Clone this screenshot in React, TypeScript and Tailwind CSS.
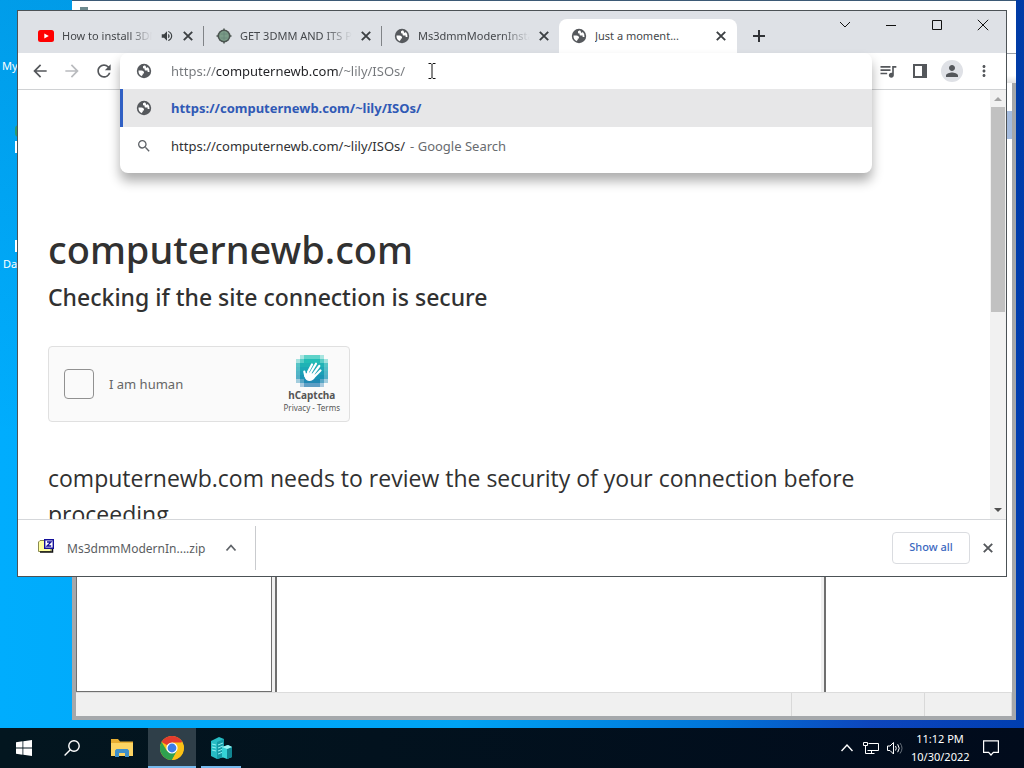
import type { ReactNode } from "react";
import clsx from "clsx";
import {
  MdArrowBack,
  MdArrowForward,
  MdMoreVert,
  MdPerson,
  MdQueueMusic,
  MdRefresh,
  MdSearch,
  MdVolumeUp,
} from "react-icons/md";

const URL_TEXT = "https://computernewb.com/~lily/ISOs/";

function GlobeIcon({ className }: { className?: string }) {
  return (
    <svg viewBox="0 0 16 16" className={clsx("shrink-0", className)} aria-hidden="true">
      <circle cx="8" cy="8" r="7.2" fill="#56595d" />
      <path
        d="M8.4 2.400 7 3.200v1.200c0 .7.5 1.100 1.100 1.100h.5v1.100c0 .6.5 1 1.100 1h1.900v1.300h1.900A5.500 5.500 0 0 0 11.800 4C11.200 5.200 9.900 4.900 9.900 3.900c0-.8-.5-1.500-1.500-1.500Z"
        fill="#fff"
      />
      <path
        d="M2.500 7.600h3c1.600 0 2.500 1 2.500 2.200v.6H6.800v1.200c0 .5-.4.9-.9.900v.700A5.600 5.600 0 0 1 2.500 7.600Z"
        fill="#fff"
      />
    </svg>
  );
}

function CloseIcon() {
  return (
    <svg viewBox="0 0 10 10" className="size-2.5" stroke="currentColor" strokeWidth="1.900" aria-hidden="true">
      <path d="m.8.8 8.400 8.400M9.200.8.8 9.200" />
    </svg>
  );
}

function YoutubeIcon() {
  return (
    <svg viewBox="0 0 16 12" className="h-3 w-4 shrink-0" aria-hidden="true">
      <rect width="16" height="12" rx="2.500" fill="#f00" />
      <path d="M6.300 3.400v5.200L10.800 6z" fill="#fff" />
    </svg>
  );
}

function GearGlobeIcon() {
  return (
    <svg viewBox="0 0 16 16" className="size-4 shrink-0" aria-hidden="true">
      <path d="M8 .5v15M.5 8h15" stroke="#4b5450" strokeWidth="1.500" />
      <circle cx="8" cy="8" r="6.500" fill="#4b5450" />
      <circle cx="8" cy="8" r="4.900" fill="#7b9c88" />
      <path d="M4.500 6h7M4.500 10h7M8 3.500v9" stroke="#67877a" strokeWidth=".8" />
    </svg>
  );
}

interface TabProps {
  title: string;
  icon: ReactNode;
  active?: boolean;
  audio?: boolean;
  divider?: boolean;
}

function Tab({ title, icon, active, audio, divider }: TabProps) {
  return (
    <div
      role="tab"
      aria-selected={!!active}
      className={clsx(
        "relative flex h-full w-[178px] items-center pl-3 pr-1.5",
        active && "-ml-px rounded-t-lg bg-white",
      )}
    >
      {icon}
      <span
        className={clsx(
          "ml-2 flex-1 overflow-hidden whitespace-nowrap text-[11px]",
          active ? "text-[#45474a]" : "text-[#45484c] [mask-image:linear-gradient(to_right,black_75%,transparent)]",
        )}
      >
        {title}
      </span>
      {audio && <MdVolumeUp className="ml-2 size-3.5 shrink-0 text-[#3c4043]" />}
      <button aria-label={`Close ${title}`} className="ml-1 flex size-5 shrink-0 items-center justify-center text-[#3c4043]">
        <CloseIcon />
      </button>
      {divider && <span className="absolute right-0 h-5 w-px bg-[#808387]" />}
    </div>
  );
}

function CaptionButton({ label, children }: { label: string; children: ReactNode }) {
  return (
    <button aria-label={label} className="flex h-7 w-[46px] items-center justify-center">
      <svg viewBox="0 0 12 12" className="size-3" fill="none" stroke="#111" aria-hidden="true">
        {children}
      </svg>
    </button>
  );
}

function TabStrip() {
  return (
    <div className="flex h-[42px] shrink-0 justify-between bg-[#dee1e6]">
      <div role="tablist" className="flex items-center pl-2 pt-2">
        <Tab title="How to install 3DMM" icon={<YoutubeIcon />} audio divider />
        <Tab title="GET 3DMM AND ITS PARTS" icon={<GearGlobeIcon />} divider />
        <Tab title="Ms3dmmModernInstaller" icon={<GlobeIcon className="size-4" />} />
        <Tab title="Just a moment..." icon={<GlobeIcon className="size-4" />} active />
        <button aria-label="New tab" className="ml-2 flex size-7 items-center justify-center">
          <svg viewBox="0 0 12 12" className="size-3" stroke="#303236" strokeWidth="2" aria-hidden="true">
            <path d="M6 0v12M0 6h12" />
          </svg>
        </button>
      </div>
      <div className="flex">
        <CaptionButton label="Search tabs">
          <path d="m1 3 5 5 5-5" />
        </CaptionButton>
        <CaptionButton label="Minimize">
          <path d="M1 6.500h10" />
        </CaptionButton>
        <CaptionButton label="Maximize">
          <path d="M1.500 1.500h9v9h-9z" />
        </CaptionButton>
        <CaptionButton label="Close">
          <path d="m.8.8 10.400 10.400M11.200.8.8 11.200" />
        </CaptionButton>
      </div>
    </div>
  );
}

function ToolButton({ label, children }: { label: string; children: ReactNode }) {
  return (
    <button aria-label={label} className="flex size-8 shrink-0 items-center justify-center text-[#54575b]">
      {children}
    </button>
  );
}

function Omnibox() {
  return (
    <div className="relative z-10 flex-1">
      <div className="absolute inset-x-0 top-0 overflow-hidden rounded-lg bg-white text-[13px] shadow-[0_8px_12px_rgba(0,0,0,0.32)]">
        <div className="flex h-9 items-center pl-4">
          <GlobeIcon className="size-4" />
          <input
            aria-label="Address and search bar"
            defaultValue={URL_TEXT}
            className="ml-[19px] w-[252px] bg-[linear-gradient(to_right,#74777b_45px,#202124_45px,#202124_168px,#74777b_168px)] bg-clip-text pt-0.5 text-transparent outline-none"
          />
          <svg viewBox="0 0 8 16" className="ml-[5px] h-4 w-2" fill="none" stroke="#111" aria-hidden="true">
            <path d="M.5.5h2.500l1 1 1-1h2.500M4 1.500v13M.5 15.500h2.500l1-1 1 1h2.500" />
          </svg>
        </div>
        <a href="#result" className="flex h-[38px] items-center border-l-3 border-[#3060c4] bg-[#e7e7e8] pl-[13px] font-bold text-[#3059b5]">
          <GlobeIcon className="size-4" />
          <span className="ml-[19px] pt-0.5">{URL_TEXT}</span>
        </a>
        <a href="#search" className="mb-2 flex h-[38px] items-center pl-4 text-[#303134]">
          <MdSearch className="size-4 text-[#5f6368]" />
          <span className="ml-[19px] pt-0.5">{URL_TEXT}</span>
          <span className="ml-[5px] pt-0.5 text-[#686b6f]">- Google Search</span>
        </a>
      </div>
    </div>
  );
}

function Toolbar() {
  return (
    <div className="flex h-[37px] shrink-0 items-start border-b border-[#d0d2d4] bg-white px-1.5">
      <div className="flex h-9 items-center">
        <ToolButton label="Back">
          <MdArrowBack className="size-5" />
        </ToolButton>
        <ToolButton label="Forward">
          <MdArrowForward className="size-5 text-[#b9bbbe]" />
        </ToolButton>
        <ToolButton label="Reload">
          <MdRefresh className="size-5" />
        </ToolButton>
      </div>
      <Omnibox />
      <div className="flex h-9 items-center">
        <ToolButton label="Media controls">
          <MdQueueMusic className="size-5" />
        </ToolButton>
        <ToolButton label="Side panel">
          <svg viewBox="0 0 14 14" className="size-3.5" aria-hidden="true">
            <path d="M1 1h12v12H1z" fill="none" stroke="#54575b" strokeWidth="2" />
            <path d="M9 1h4v12H9z" fill="#54575b" />
          </svg>
        </ToolButton>
        <ToolButton label="Profile">
          <span className="flex size-[22px] items-center justify-center rounded-full bg-[#dfe1e6]">
            <MdPerson className="size-[18px]" />
          </span>
        </ToolButton>
        <ToolButton label="Menu">
          <MdMoreVert className="size-[18px]" />
        </ToolButton>
      </div>
    </div>
  );
}

// Outer squares fade out so the badge reads as a pixelated disc.
const LOGO_ROWS = [" .oooo. ", ".oxxxxo.", "oxxxxxxo", "oxxxxxxo", "oxxxxxxo", "oxxxxxxo", ".oxxxxo.", " .oooo. "];
const LOGO_COLORS = ["#2cc5b8", "#22bdb6", "#1fb2b5", "#1ca8b6", "#1a9fb6", "#1b95b5", "#2089b3", "#2a7fb3"];
const LOGO_OPACITY: Record<string, number> = { ".": 0.4, o: 0.75, x: 1 };

function CaptchaLogo() {
  return (
    <svg viewBox="0 0 32 32" className="size-8" aria-hidden="true">
      <g shapeRendering="crispEdges">
        {LOGO_ROWS.map((row, y) =>
          row.split("").map((cell, x) =>
            cell === " " ? null : (
              <rect
                key={`${x}-${y}`}
                x={x * 4}
                y={y * 4}
                width="4"
                height="4"
                fill={LOGO_COLORS[y]}
                opacity={LOGO_OPACITY[cell]}
              />
            ),
          ),
        )}
      </g>
      <g stroke="#fff" strokeWidth="2.200" strokeLinecap="round">
        <path d="m12 17 4-7.500M14.500 18l5.500-9.300M17 19.500l6.300-8.500M18.500 21.500l6-6" />
        <path d="m9.300 21-1-4.500" />
      </g>
      <path d="M8.300 17.500c.7 1.500 2.500 1.200 3.300-.8l8.400 3.300-1 2.500c-1.500 3.200-5.700 4.500-8.500 2.500-1.800-1.200-2.500-4-2.200-7.500Z" fill="#fff" />
    </svg>
  );
}

function ChallengePage() {
  return (
    <main className="min-w-0 flex-1 overflow-hidden px-[30px] pt-[131px] text-[#313131]">
      <h1 className="text-[38px] leading-[56px] font-medium">computernewb.com</h1>
      <h2 className="pt-0.5 text-[23px] leading-9 font-medium">Checking if the site connection is secure</h2>
      <div className="mt-[31px] flex h-[76px] w-[302px] items-center rounded border border-[#e0e0e0] bg-[#fafafa] pl-[15px] pr-[9px]">
        <input
          id="human"
          type="checkbox"
          className="size-[30px] shrink-0 appearance-none rounded border border-[#919191] bg-[#fafafa]"
        />
        <label htmlFor="human" className="ml-[15px] flex-1 pt-0.5 text-[13px] text-[#666]">
          I am human
        </label>
        <div className="flex flex-col items-center">
          <CaptchaLogo />
          <span className="text-[10px] leading-4 font-bold text-[#555]">hCaptcha</span>
          <span className="text-[8px] leading-[10px] text-[#555]">
            <a href="#privacy">Privacy</a> - <a href="#terms">Terms</a>
          </span>
        </div>
      </div>
      <p className="mt-[38px] font-['Open_Sans','Noto_Sans',sans-serif] text-[23px] leading-9">
        computernewb.com needs to review the security of your connection before proceeding.
      </p>
    </main>
  );
}

function Scrollbar() {
  return (
    <div className="flex w-4 shrink-0 flex-col items-center bg-[#f1f1f1]" aria-hidden="true">
      <svg viewBox="0 0 16 17" className="h-[17px] w-4 shrink-0">
        <path d="M4 11h8L8 7z" fill="#a3a3a3" />
      </svg>
      <div className="w-full flex-1">
        <div className="mx-px h-[52%] bg-[#c1c1c1]" />
      </div>
      <svg viewBox="0 0 16 17" className="h-[17px] w-4 shrink-0">
        <path d="M4 6h8l-4 4z" fill="#505050" />
      </svg>
    </div>
  );
}

function DownloadBar() {
  return (
    <div className="flex h-[57px] shrink-0 items-center justify-between border-t border-[#d5d7da] bg-white pr-1.5">
      <div className="flex h-[44px] items-center border-r border-[#c9cbce] pl-5 pr-3">
        <svg viewBox="0 0 16 16" className="mb-1 size-4" aria-hidden="true">
          <path d="M.5 4 2 2.500h4L7 4h6v9.500H.5z" fill="#ffffa0" stroke="#8a8a50" />
          <path d="M2 14h12.500V7" fill="none" stroke="#111" strokeWidth="1.500" />
          <path d="M6.700 1.700h8.600v8.600H6.700z" fill="#fff" stroke="#14109a" strokeWidth="1.400" />
          <path d="M9 4h4l-4 4h4.200" fill="none" stroke="#14109a" strokeWidth="1.300" />
        </svg>
        <span className="ml-[13px] pt-0.5 text-xs text-[#5a5d61]">Ms3dmmModernIn....zip</span>
        <button aria-label="Download options" className="ml-3.5 flex size-6 items-center justify-center">
          <svg viewBox="0 0 12 12" className="size-3" fill="none" stroke="#5f6368" strokeWidth="1.800" aria-hidden="true">
            <path d="m1.500 8.500 4.500-5 4.500 5" />
          </svg>
        </button>
      </div>
      <div className="flex items-center gap-1.5">
        <button className="h-8 w-[78px] rounded border border-[#dadce0] pb-0.5 text-[11px] font-medium text-[#3c68c0]">
          Show all
        </button>
        <button aria-label="Close downloads" className="flex size-6 items-center justify-center text-[#54575b]">
          <CloseIcon />
        </button>
      </div>
    </div>
  );
}

function BrowserWindow() {
  return (
    <section className="absolute inset-x-[17px] top-2.5 bottom-[151px] flex flex-col border border-[#4c5256] bg-white">
      <TabStrip />
      <Toolbar />
      <div className="flex min-h-0 flex-1">
        <ChallengePage />
        <Scrollbar />
      </div>
      <DownloadBar />
    </section>
  );
}

function ServerManagerWindow() {
  return (
    <section className="absolute top-0 right-2 bottom-2 left-[72px] flex flex-col border-t border-[#3d5a76] bg-white">
      <div className="h-[53px] shrink-0 border-b border-[#9aa0a8] pt-1.5 pl-2">
        <div className="h-2 w-2 bg-[#6d8a8e]" />
      </div>
      <div className="h-[29px] shrink-0 bg-linear-to-b from-white from-75% to-[#e2e2e2]" />
      <div className="flex min-h-0 flex-1 flex-col border-4 border-t-0 border-[#a5a8ab] bg-[#f0f0f0]">
        <div className="flex min-h-0 flex-1 gap-[3px]">
          <div className="w-[196px] border-r border-b border-l border-[#6f6f6f] bg-white" />
          <div className="flex-1 border-l-2 border-[#6f6f6f] bg-white" />
          <div className="w-[188px] border-l-2 border-[#6f6f6f] bg-white pt-7">
            <div className="h-7 bg-[#a5bcdf]" />
          </div>
        </div>
        <div className="flex h-6 shrink-0 justify-end border-t border-[#dcdcdc]">
          <div className="w-[133px] border-l border-[#d9d9d9]" />
          <div className="w-[88px] border-x border-[#d9d9d9]" />
        </div>
      </div>
    </section>
  );
}

function ChromeLogo() {
  return (
    <svg viewBox="0 0 24 24" className="size-6" aria-hidden="true">
      <circle cx="12" cy="12" r="12" fill="#fbc116" />
      <path d="M12 12 1.600 6A12 12 0 0 1 22.400 6z" fill="#e33b2e" />
      <path d="M1.600 6A12 12 0 0 0 12 24l5-9.200L7 15z" fill="#2fa14f" />
      <path d="M22.400 6.500H12v5.500l5 3L12 24A12 12 0 0 0 22.400 6.500Z" fill="#fbc116" />
      <circle cx="12" cy="12" r="5.600" fill="#fff" />
      <circle cx="12" cy="12" r="4.400" fill="#3b7de8" />
    </svg>
  );
}

function TaskButton({ label, className, children }: { label: string; className?: string; children: ReactNode }) {
  return (
    <button aria-label={label} className={clsx("flex h-full w-12 items-center justify-center", className)}>
      {children}
    </button>
  );
}

function Taskbar() {
  return (
    <footer className="flex h-10 shrink-0 items-center justify-between bg-linear-to-r from-[#03161f] to-[#010b1c] text-white">
      <div className="flex h-full">
        <TaskButton label="Start">
          <svg viewBox="0 0 16 16" className="size-4" fill="#fff" aria-hidden="true">
            <path d="M0 2.200 6.500 1.300v6.200H0zM7.300 1.200 16 0v7.500H7.300zM0 8.400h6.500v6.300L0 13.800zM7.300 8.400H16V16l-8.700-1.200z" />
          </svg>
        </TaskButton>
        <TaskButton label="Search">
          <svg viewBox="0 0 16 16" className="size-4" fill="none" stroke="#fff" strokeWidth="1.400" aria-hidden="true">
            <circle cx="10" cy="6" r="5.200" />
            <path d="M6.300 9.700.6 15.400" />
          </svg>
        </TaskButton>
        <TaskButton label="File Explorer" className="ml-0.5">
          <svg viewBox="0 0 22 18" className="h-[18px] w-[22px]" aria-hidden="true">
            <path d="M0 0h7l2 2.500h13V17H0z" fill="#e6ad32" />
            <path d="M0 4h22v13H0z" fill="#fcd463" />
            <path d="M4 18v-6.500L5.500 10h11l1.500 1.500V18h-4v-4H8v4z" fill="#3e8fcb" />
          </svg>
        </TaskButton>
        <TaskButton label="Google Chrome" className="ml-0.5 border-b-2 border-[#76b9ed] bg-[#2f3f49] pt-0.5">
          <ChromeLogo />
        </TaskButton>
        <TaskButton label="Server Manager" className="relative ml-px">
          <svg viewBox="0 0 22 22" className="size-[22px]" aria-hidden="true">
            <path d="m1 4 8-4 5 2v18l-7 2-6-3z" fill="#27bcc4" />
            <path d="m7 5 7-3v18l-7 2z" fill="#159aa6" />
            <path d="m8 8 5-2M8 11l5-2M8 14l5-2M8 17l5-2M2 7l4 1M2 10l4 1M2 13l4 1" stroke="#8ff0f2" />
            <path d="m12 10 6-2 4 2v10l-5 2-5-2z" fill="#35d3d6" />
            <path d="m17 12 5-2v10l-5 2z" fill="#118591" />
            <path d="m12 10 6-2 4 2-5 2z" fill="#9df3f3" />
          </svg>
          <span className="absolute inset-x-1 bottom-0 h-0.5 bg-[#76b9ed]" />
        </TaskButton>
      </div>
      <div className="flex h-full items-center pr-[25px]">
        <svg viewBox="0 0 12 12" className="size-3" fill="none" stroke="#fff" strokeWidth="1.400" aria-hidden="true">
          <path d="m.5 9 5.500-6 5.500 6" />
        </svg>
        <svg viewBox="0 0 16 14" className="ml-2.5 h-3.5 w-4" fill="none" stroke="#fff" aria-hidden="true">
          <path d="M5.500 2.500h10v7h-11M.5 1.500h4v3h-4zM2.500 4.500v8M2.500 12.500h9M8.500 9.500v3" />
        </svg>
        <svg viewBox="0 0 16 14" className="ml-2 h-3.5 w-4" fill="none" stroke="#fff" aria-hidden="true">
          <path d="M.5 5v4.500h2.500l3.500 3.500V1.500L3 5zM8.500 5q1.500 2.200 0 4.500M10.700 3.300q3 4 0 7.900" />
          <path d="M13 2q4 5.200 0 10.500" stroke="#68717b" />
        </svg>
        <div className="ml-2 w-[58px] text-center text-[11px] leading-[18px] whitespace-nowrap">
          <div>11:12 PM</div>
          <div>10/30/2022</div>
        </div>
        <button aria-label="Notifications" className="ml-3.5">
          <svg viewBox="0 0 16 16" className="size-4" fill="none" stroke="#fff" strokeWidth="1.200" aria-hidden="true">
            <path d="M.6.8h14.800v11.500h-5L8 15l-2.400-2.700h-5z" />
          </svg>
        </button>
      </div>
    </footer>
  );
}

export default function App() {
  return (
    <div className="flex h-screen flex-col overflow-hidden font-['Noto_Sans','Open_Sans',sans-serif]">
      <div className="relative min-h-0 flex-1 overflow-hidden bg-[linear-gradient(to_bottom,rgba(0,40,90,0.12),transparent_60%),linear-gradient(to_right,#00adfd_0%,#00a3f4_45%,#0074d8_70%,#0d46bd_85%,#003eb0_100%)]">
        <span className="absolute top-[58px] left-0.5 text-[11px] text-white">My</span>
        <span className="absolute top-[125px] left-[15px] h-3 w-2 rounded-full bg-[#2f9a6a]" />
        <span className="absolute top-[141px] left-[15px] h-3 w-4 bg-white" />
        <span className="absolute top-[240px] left-[15px] h-3 w-4 bg-white" />
        <span className="absolute top-[256px] left-[3px] text-[11px] text-white">Da</span>
        <ServerManagerWindow />
        <BrowserWindow />
      </div>
      <Taskbar />
    </div>
  );
}
